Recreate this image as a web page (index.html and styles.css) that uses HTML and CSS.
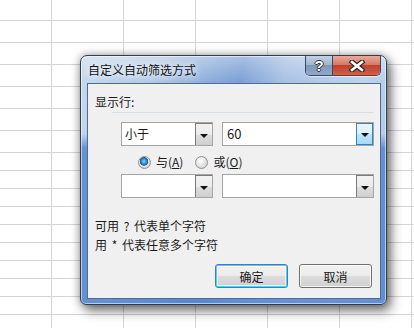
FILE: index.html
```html
<!DOCTYPE html>
<html lang="zh-CN">
  <head>
    <meta charset="UTF-8" />
    <meta name="viewport" content="width=device-width, initial-scale=1.0" />
    <title>自定义自动筛选方式</title>
    <link rel="stylesheet" href="styles.css">
  </head>

  <body>
    <div class="sheet">
      <div class="dialog">
        <div class="titlebar">
          <span class="title">自定义自动筛选方式</span>
          <div class="caption-buttons">
            <span class="caption-button help-button">?</span>
            <span class="caption-button close-button">
              <svg width="16" height="12" viewBox="0 0 16 12">
                <path d="M3 2 L13 10 M13 2 L3 10" stroke="#2b2b2b" stroke-width="5" stroke-linecap="square" />
                <path d="M3 2 L13 10 M13 2 L3 10" stroke="#ffffff" stroke-width="2.6" stroke-linecap="square" />
              </svg>
            </span>
          </div>
        </div>

        <div class="client">
          <p class="group-label">显示行:</p>
          <div class="separator"></div>

          <div class="combo-row first-row">
            <div class="combo small-combo">
              <span class="combo-text">小于</span>
              <span class="drop-button"><span class="arrow"></span></span>
            </div>
            <div class="combo wide-combo">
              <span class="combo-text value-text">60</span>
              <span class="drop-button hot"><span class="arrow"></span></span>
            </div>
          </div>

          <div class="radio-row">
            <label class="radio-item">
              <span class="radio checked"></span>
              <span>与(<u>A</u>)</span>
            </label>
            <label class="radio-item">
              <span class="radio"></span>
              <span>或(<u>O</u>)</span>
            </label>
          </div>

          <div class="combo-row second-row">
            <div class="combo small-combo">
              <span class="combo-text"></span>
              <span class="drop-button"><span class="arrow"></span></span>
            </div>
            <div class="combo wide-combo">
              <span class="combo-text"></span>
              <span class="drop-button"><span class="arrow"></span></span>
            </div>
          </div>

          <div class="hints">
            <p>可用 ? 代表单个字符</p>
            <p>用 * 代表任意多个字符</p>
          </div>

          <div class="button-row">
            <button class="dialog-button default-button">确定</button>
            <button class="dialog-button">取消</button>
          </div>
        </div>
      </div>
    </div>
  </body>
</html>
```

FILE: styles.css
```css
body {
  margin: 0;
  font-family: "Noto Sans CJK SC", "Liberation Sans", sans-serif;
  font-size: 12px;
  color: #1a1a1a;
}

/* spreadsheet grid behind the dialog */
.sheet {
  width: 414px;
  height: 328px;
  box-sizing: border-box;
  padding: 55px 0 0 80px;
  background-color: white;
  background-image:
    linear-gradient(to right, #d4d4d4 1px, transparent 1px),
    repeating-linear-gradient(to bottom, transparent 0 20px, #d4d4d4 20px 21px, transparent 21px 22px),
    repeating-linear-gradient(to bottom, transparent 0 17px, #d4d4d4 17px 18px);
  background-size: 72px 100%, 100% 153px, 100% 175px;
  background-position: 51px 0, 0 0, 0 153px;
  background-repeat: repeat-x, no-repeat, no-repeat;
  overflow: hidden;
}

.dialog {
  width: 307px;
  height: 250px;
  box-sizing: border-box;
  display: flex;
  flex-direction: column;
  padding: 0 5px 5px 6px;
  border: 1px solid #2f3d52;
  border-radius: 7px 7px 6px 6px;
  background:
    linear-gradient(to bottom, rgba(255, 255, 255, 0.35) 0, rgba(255, 255, 255, 0) 26px),
    linear-gradient(to bottom, rgba(80, 130, 205, 0) 0 78px, rgba(80, 130, 205, 0.8) 92px, rgba(80, 130, 205, 0.8) 100%),
    linear-gradient(102deg, #c6d8ee 0%, #afc7e7 22%, #86a8d8 40%, #7b9fd4 46%, #a7c1e5 58%, #bdd1eb 80%, #a9c3e6 100%);
  box-shadow:
    inset 0 0 0 1px rgba(255, 255, 255, 0.55),
    0 0 8px rgba(0, 0, 0, 0.35),
    4px 6px 12px rgba(0, 0, 0, 0.5);
}

.titlebar {
  height: 27px;
  display: flex;
  justify-content: space-between;
  align-items: flex-start;
}

.title {
  margin: 6px 0 0 1px;
  font-size: 12px;
  line-height: 16px;
  color: #111;
  text-shadow: 0 0 6px #fff, 0 0 10px rgba(255, 255, 255, 0.9);
}

.caption-buttons {
  display: flex;
  height: 19px;
  border: 1px solid #3a4a63;
  border-top: none;
  border-radius: 0 0 5px 5px;
  overflow: hidden;
  box-shadow: 0 1px 0 rgba(255, 255, 255, 0.5);
}

.caption-button {
  display: flex;
  align-items: center;
  justify-content: center;
  height: 19px;
  box-sizing: border-box;
}

.help-button {
  width: 27px;
  border-right: 1px solid #3a4a63;
  background: linear-gradient(to bottom, #c3d1e4 0%, #a2b6d1 45%, #7f97b9 50%, #90a9cb 100%);
  font-family: "Liberation Sans", sans-serif;
  font-weight: bold;
  font-size: 15px;
  color: white;
  text-shadow: -1px 0 #333, 1px 0 #333, 0 -1px #333, 0 1px #333;
}

.close-button {
  width: 47px;
  background: linear-gradient(to bottom, #e9a99b 0%, #d67a68 45%, #c0402c 50%, #d0604a 100%);
}

.client {
  flex: 1;
  border: 1px solid #4d6b93;
  background-color: #f0f0f0;
}

.group-label {
  margin: 10px 0 0 7px;
  line-height: 16px;
}

.separator {
  width: 262px;
  height: 1px;
  margin: 2px 0 0 24px;
  background-color: #d5dfe5;
}

.combo-row {
  display: flex;
  gap: 9px;
  margin-left: 33px;
}

.first-row {
  margin-top: 9px;
}

.second-row {
  margin-top: 4px;
}

.combo {
  display: flex;
  height: 24px;
  box-sizing: border-box;
  border: 1px solid #a5a5a5;
  background-color: white;
}

.small-combo {
  width: 92px;
}

.wide-combo {
  width: 152px;
}

.combo-text {
  flex: 1;
  padding-left: 3px;
  line-height: 22px;
}

.value-text {
  padding-left: 4px;
  font-size: 13px;
}

.drop-button {
  width: 17px;
  display: flex;
  align-items: center;
  justify-content: center;
  box-sizing: border-box;
  border: 1px solid #7a7a7a;
  border-right: none;
  border-bottom: none;
  background: linear-gradient(to bottom, #f2f2f2 0%, #ebebeb 50%, #dddddd 51%, #cfcfcf 100%);
}

.drop-button.hot {
  border-color: #3c7fb1;
  border-right: 1px solid #3c7fb1;
  border-bottom: 1px solid #3c7fb1;
  background: linear-gradient(to bottom, #eaf6fd 0%, #d9f0fc 50%, #bee6fd 51%, #a7d9f5 100%);
}

.arrow {
  width: 0;
  height: 0;
  margin-top: 2px;
  border-left: 4px solid transparent;
  border-right: 4px solid transparent;
  border-top: 4px solid #111;
}

.radio-row {
  display: flex;
  gap: 12px;
  height: 16px;
  margin: 8px 0 0 50px;
}

.radio-item {
  display: flex;
  align-items: center;
  gap: 5px;
  line-height: 16px;
}

.radio-item u {
  text-underline-offset: 1px;
}

.radio {
  width: 13px;
  height: 13px;
  box-sizing: border-box;
  border: 1px solid #8e8f8f;
  border-radius: 50%;
  background: radial-gradient(circle at 40% 35%, #ffffff 0%, #e6e6e6 45%, #c9c9c9 100%);
}

.radio.checked {
  background:
    radial-gradient(circle at 45% 40%, #9fd6fb 0, #3d9be0 2px, #1d5d9c 4px, transparent 4.5px),
    radial-gradient(circle at 40% 35%, #ffffff 0%, #e6e6e6 45%, #c9c9c9 100%);
}

.hints {
  margin: 18px 0 0 7px;
  word-spacing: 2px;
}

.hints p {
  margin: 0;
  line-height: 19px;
}

.button-row {
  display: flex;
  justify-content: flex-end;
  gap: 11px;
  margin: 10px 8px 0 0;
}

.dialog-button {
  width: 73px;
  height: 24px;
  padding: 0;
  font-family: "Noto Sans CJK SC", "Liberation Sans", sans-serif;
  font-size: 12px;
  color: #1a1a1a;
  border: 1px solid #707070;
  border-radius: 3px;
  background: linear-gradient(to bottom, #f2f2f2 0%, #ebebeb 50%, #dddddd 51%, #cfcfcf 100%);
  box-shadow: inset 0 0 0 1px rgba(255, 255, 255, 0.8);
}

.default-button {
  border-color: #3c7fb1;
  box-shadow: inset 0 0 0 1px #48d2fd, inset 0 0 0 2px rgba(255, 255, 255, 0.6);
}
```
